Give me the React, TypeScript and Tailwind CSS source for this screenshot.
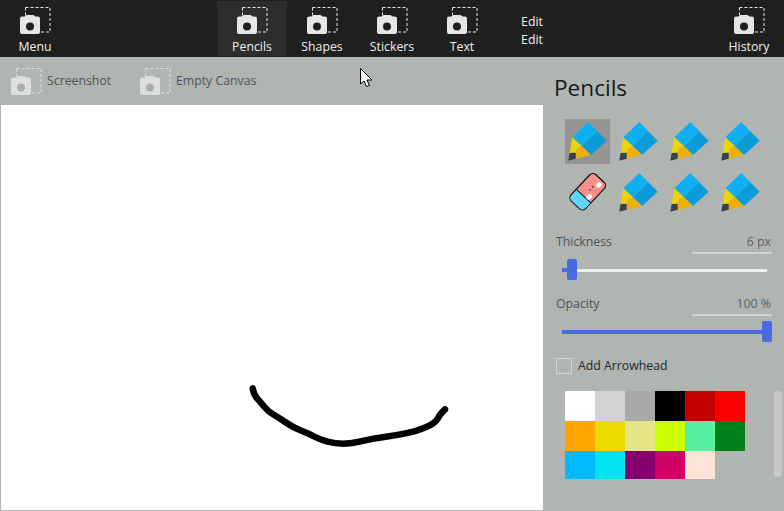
const font = { fontFamily: '"Open Sans", "Noto Sans", sans-serif' };

function CamIcon({ dim }: { dim?: boolean }) {
  return (
    <svg width="31" height="28" viewBox="0 0 31 28" className="block">
      <rect x="5.5" y="0.5" width="24.5" height="24.5" fill="none" stroke={dim ? "#dfe2df" : "#e6e6e4"} strokeWidth="1" strokeDasharray="3 2" />
      <path d="M0 11.5 a2 2 0 0 1 2-2 h2.5 l2-1.5 h7 l2 1.5 h2.5 a2 2 0 0 1 2 2 v13.5 a2 2 0 0 1-2 2 h-16 a2 2 0 0 1-2-2 z" fill={dim ? "#dcdfdc" : "#e6e6e4"} />
      <circle cx="10" cy="19.5" r="4" fill={dim ? "#a9aeaa" : "#1f1f1f"} />
    </svg>
  );
}

function TopBtn({ label, active }: { label: string; active?: boolean }) {
  return (
    <div className={`w-[70px] h-[55px] mt-px flex flex-col ${active ? "bg-[#2d2d2d]" : ""}`}>
      <div className="pl-[20px] pt-[6px]"><CamIcon /></div>
      <div className="text-center text-[12.3px] leading-[17px] mt-[3px] text-[#eef0f2]">{label}</div>
    </div>
  );
}

function SubBtn({ label }: { label: string }) {
  return (
    <div className="flex items-start h-[37px] pt-[11px] w-[129px] first:ml-[11px]">
      <CamIcon dim />
      <span className="ml-[5px] mt-[3px] text-[12.3px] leading-[20px] text-[#4c545c]">{label}</span>
    </div>
  );
}

function Pencil() {
  return (
    <svg width="45" height="45" viewBox="0 0 45 45" className="block">
      <polygon points="23.3,3 32.3,12.3 16.7,27 7.3,18.3" fill="#0db0f2" />
      <polygon points="32.3,12.3 41.7,21.7 26,36 16.7,27" fill="#0a9bd8" />
      <path d="M7.3 18.3 L16.7 27 Q12 28.5 10.7 33.7 L4.6 34 Z" fill="#ecd40c" />
      <path d="M16.7 27 L26 36 L10.7 39.8 L10.7 33.7 Q12 28.5 16.7 27 Z" fill="#eeb008" />
      <polygon points="4.6,34 10.7,33.7 10.7,39.8 3.3,41.7" fill="#36434f" />
    </svg>
  );
}

function Eraser() {
  return (
    <svg width="45" height="45" viewBox="0 0 45 45" className="block">
      <g transform="translate(22.7 21.7) rotate(-47)">
        <rect x="-18" y="-10" width="36" height="20" rx="4.5" fill="#fb8f8c" stroke="#111" strokeWidth="1.2" />
        <path d="M-6 -9.4 H-13.5 a3.9 3.9 0 0 0 -3.9 3.9 V5.5 a3.9 3.9 0 0 0 3.9 3.9 H-6 Z" fill="#5cd5ff" />
        <path d="M-6 -9.5 V9.5" stroke="#111" strokeWidth="1" />
        <ellipse cx="-2.8" cy="4.5" rx="3" ry="2.4" fill="#fff" />
        <ellipse cx="12.5" cy="3.5" rx="3" ry="2.4" fill="#fff" />
        <circle cx="3" cy="0.5" r="0.8" fill="#333" />
        <circle cx="7" cy="0.5" r="0.8" fill="#333" />
      </g>
    </svg>
  );
}

function Slider({ label, value, fill, thumb, thick }: { label: string; value: string; fill: number; thumb: number; thick?: boolean }) {
  return (
    <div className="pl-[12px] pr-[12px]">
      <div className="flex justify-between items-start h-[22px]">
        <span className="text-[12.3px] leading-[20px] text-[#4c545c]">{label}</span>
        <span className="w-[80px] h-[22px] pr-px text-right text-[12.3px] leading-[20px] text-[#5a6268] border-b-2 border-[#cdd2d2]">{value}</span>
      </div>
      <div className="relative h-[28px] ml-[6px] mr-[5px]">
        <div className={`absolute left-0 right-0 ${thick ? "top-[14px] h-[4px] bg-[#4a6be0]" : "top-[15px] h-[3px] bg-[#ecefec]"}`} />
        <div className="absolute left-0 top-[14px] h-[4px] bg-[#4a6be0]" style={{ width: fill }} />
        <div className="absolute top-[5px] w-[10px] h-[21px] rounded-[2px] bg-[#4a6be0]" style={{ left: thumb }} />
      </div>
    </div>
  );
}

const colors = ["#ffffff", "#d2d2d2", "#a8a8a6", "#000000", "#c40000", "#ff0000", "#ffa500", "#ebd900", "#e3e587", "#ccff00", "#55f0a0", "#008018", "#00baff", "#00e2f0", "#840070", "#d20064", "#ffe4d8"];

const stroke: [number, number][] = [[38, 40], [42, 60], [62, 82], [85, 110], [120, 130], [160, 158], [205, 175], [240, 194], [285, 206], [335, 206], [395, 191], [470, 181], [530, 168], [585, 145], [600, 118], [615, 103]].map(([x, y]) => [x / 3 + 240, y / 3 + 375]);

function strokePath() {
  let d = `M${stroke[0][0]} ${stroke[0][1]}`;
  for (let i = 1; i < stroke.length - 1; i++) {
    const [x, y] = stroke[i];
    const [nx, ny] = stroke[i + 1];
    d += ` Q${x} ${y} ${(x + nx) / 2} ${(y + ny) / 2}`;
  }
  const last = stroke[stroke.length - 1];
  return d + ` L${last[0]} ${last[1]}`;
}

export default function App() {
  return (
    <div className="relative w-[784px] h-[511px] overflow-hidden bg-[#b0b5b1] flex flex-col" style={font}>
      <header className="h-[57px] shrink-0 bg-[#1f1f1f] flex">
        <TopBtn label="Menu" />
        <div className="flex ml-[147px]">
          <TopBtn label="Pencils" active />
          <TopBtn label="Shapes" />
          <TopBtn label="Stickers" />
          <TopBtn label="Text" />
        </div>
        <div className="w-[70px] flex flex-col items-center pt-[13px] text-[12.3px] leading-[18px] text-[#eef0f2]">
          <span>Edit</span>
          <span>Edit</span>
        </div>
        <div className="ml-auto"><TopBtn label="History" /></div>
      </header>
      <div className="flex flex-1 min-h-0">
        <main className="w-[544px] flex flex-col">
          <div className="h-[48px] flex"><SubBtn label="Screenshot" /><SubBtn label="Empty Canvas" /></div>
          <div className="flex-1 ml-px mr-px mb-px bg-white">
            <svg width="542" height="405" viewBox="1 105 542 405" className="block">
              <path d={strokePath()} fill="none" stroke="#000" strokeWidth="6.5" strokeLinecap="round" strokeLinejoin="round" />
            </svg>
          </div>
        </main>
        <aside className="w-[240px] flex flex-col">
          <h1 className="pl-[10px] pt-[15px] text-[22.6px] leading-[32px] font-normal text-[#15181c]">Pencils</h1>
          <div className="grid grid-cols-[repeat(4,45px)] gap-x-[6px] gap-y-[6px] pl-[21px] pt-[15px]">
            <div className="bg-[#949592]"><Pencil /></div>
            <Pencil /><Pencil /><Pencil />
            <Eraser />
            <Pencil /><Pencil /><Pencil />
          </div>
          <div className="mt-[17px]"><Slider label="Thickness" value="6 px" fill={6} thumb={5} /></div>
          <div className="mt-[12px]"><Slider label="Opacity" value="100 %" fill={200} thumb={200} thick /></div>
          <div className="flex items-center pl-[12px] mt-[12px] h-[20px]">
            <div className="w-[16px] h-[16px] border-[1.5px] border-[#d0d4d2]" />
            <span className="ml-[6px] text-[12.3px] leading-[20px] text-[#23272b]">Add Arrowhead</span>
          </div>
          <div className="flex mt-[15px]">
            <div className="ml-[21px] w-[180px] h-[88px] overflow-hidden grid grid-cols-[repeat(6,30px)] auto-rows-[30px] content-start">
              {colors.map((c) => <div key={c} style={{ backgroundColor: c }} />)}
            </div>
            <div className="ml-[29px] w-[8px] h-[86px] rounded-full bg-[#c8c8c6]" />
          </div>
        </aside>
      </div>
      <svg width="14" height="20" viewBox="0 0 14 20" className="absolute left-[360px] top-[68px]">
        <path d="M0.5 0.5 V16 L4 13 L6.5 18.5 L9.5 17.5 L7 12 H12 Z" fill="#fff" stroke="#000" strokeWidth="1" />
      </svg>
    </div>
  );
}
